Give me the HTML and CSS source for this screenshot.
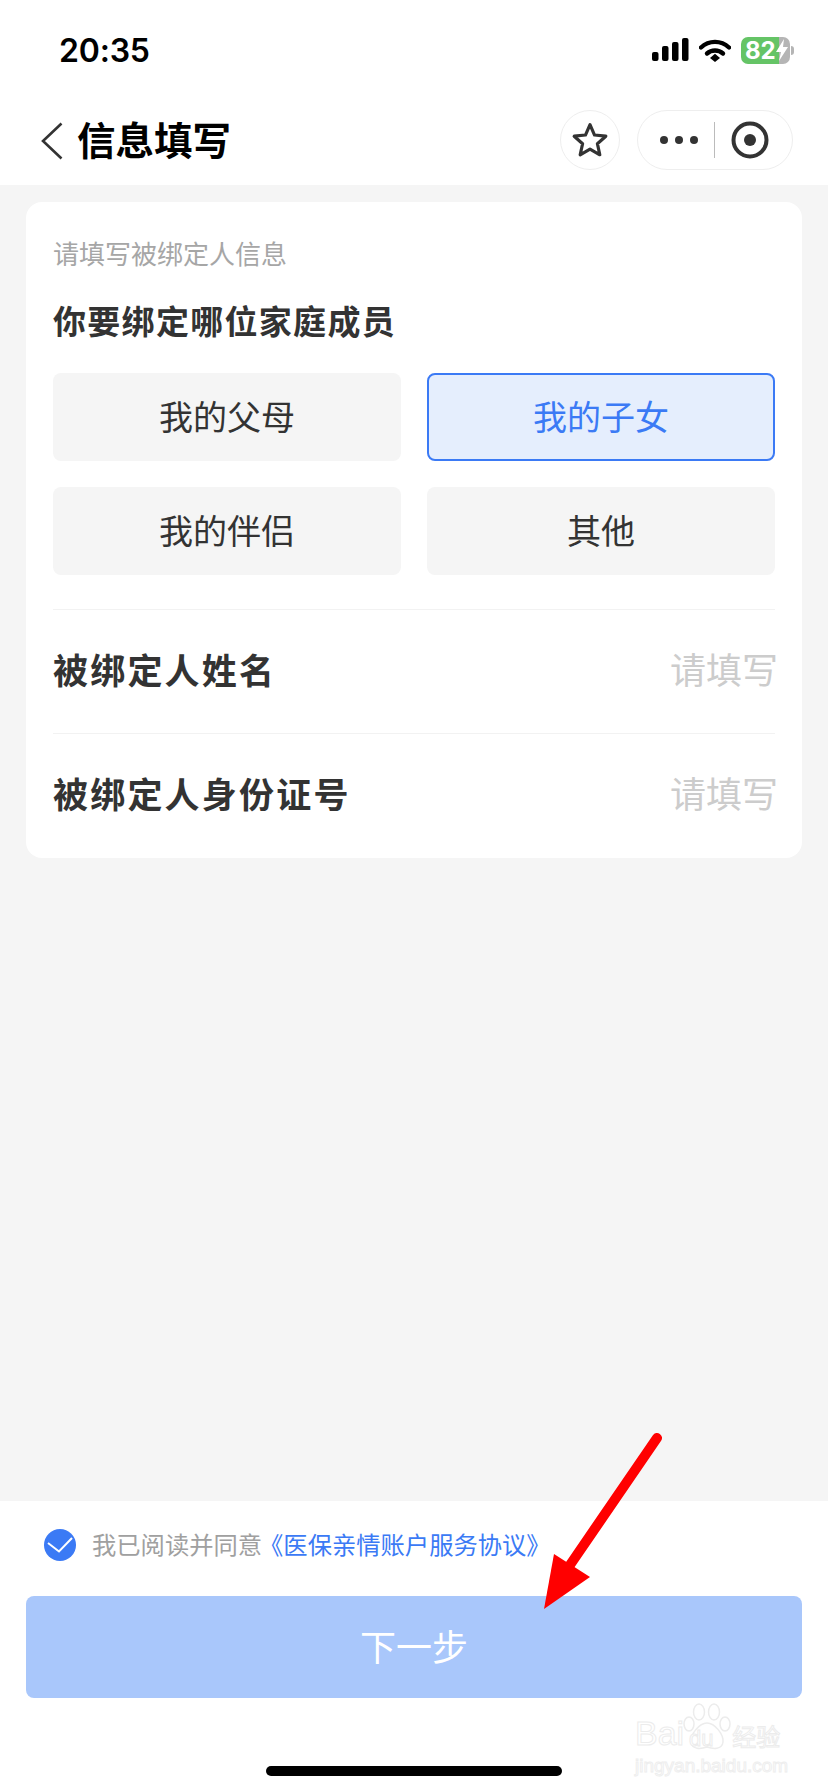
FILE: index.html
```html
<!DOCTYPE html>
<html lang="zh-CN">
<head>
    <meta charset="UTF-8">
    <meta name="viewport" content="width=device-width, initial-scale=1.0">
    <title>信息填写</title>
    <link rel="stylesheet" href="styles.css">
</head>
<body>

<div class="page">
    <div class="status-bar">
        <span class="time">20:35</span>
        <div class="status-icons">
            <svg class="signal" width="37" height="24" viewBox="0 0 37 24">
                <rect x="0" y="14" width="6.5" height="9" rx="2"/>
                <rect x="10" y="8" width="6.5" height="15" rx="2"/>
                <rect x="20" y="4" width="6.5" height="19" rx="2"/>
                <rect x="30" y="0" width="6.5" height="23" rx="2"/>
            </svg>
            <svg class="wifi" width="32" height="24" viewBox="0 0 32 24">
                <path d="M2 9.5C10 2 22 2 30 9.5" fill="none" stroke="#000" stroke-width="4.4" stroke-linecap="round"/>
                <path d="M8 15.5C12.500 11.500 19.500 11.500 24 15.500" fill="none" stroke="#000" stroke-width="4.400" stroke-linecap="round"/>
                <path d="M11 20L16 15.800L21 20L16 24Z"/>
            </svg>
            <div class="battery">
                <div class="battery-body">
                    <span class="battery-num">82</span>
                    <svg class="bolt" width="12" height="22" viewBox="0 0 12 22">
                        <path d="M8 0L0 13H5L3 22L12 8H7Z" fill="#fff"/>
                    </svg>
                </div>
                <div class="battery-tip"></div>
            </div>
        </div>
    </div>

    <div class="nav-bar">
        <svg class="back" width="24" height="38" viewBox="0 0 24 38">
            <path d="M21.500 1.500L3 19L21.500 36.500" fill="none" stroke="#333" stroke-width="2.600"/>
        </svg>
        <span class="nav-title">信息填写</span>
        <div class="nav-actions">
            <div class="star-btn">
                <svg width="38" height="38" viewBox="0 0 36 36">
                    <path d="M18 3.500L22.300 13.300L33 14.400L25 21.500L27.300 32L18 26.600L8.700 32L11 21.500L3 14.400L13.700 13.300Z" fill="none" stroke="#333" stroke-width="3" stroke-linejoin="round"/>
                </svg>
            </div>
            <div class="capsule">
                <div class="dots">
                    <span class="dot"></span>
                    <span class="dot"></span>
                    <span class="dot"></span>
                </div>
                <span class="capsule-line"></span>
                <svg width="38" height="38" viewBox="0 0 38 38">
                    <circle cx="19" cy="19" r="16.500" fill="none" stroke="#333" stroke-width="4"/>
                    <circle cx="19" cy="19" r="6" fill="#333"/>
                </svg>
            </div>
        </div>
    </div>

    <div class="content">
        <div class="card">
            <p class="hint">请填写被绑定人信息</p>
            <h2 class="question">你要绑定哪位家庭成员</h2>
            <div class="options">
                <div class="option">我的父母</div>
                <div class="option selected">我的子女</div>
                <div class="option">我的伴侣</div>
                <div class="option">其他</div>
            </div>
            <div class="field">
                <span class="field-label">被绑定人姓名</span>
                <span class="field-value">请填写</span>
            </div>
            <div class="field">
                <span class="field-label">被绑定人身份证号</span>
                <span class="field-value">请填写</span>
            </div>
        </div>
    </div>

    <div class="footer">
        <div class="agree">
            <svg class="check" width="32" height="32" viewBox="0 0 32 32">
                <circle cx="16" cy="16" r="16" fill="#3b7af5"/>
                <path d="M4 14L15 22.500L28 9" fill="none" stroke="#fff" stroke-width="2"/>
            </svg>
            <span class="agree-text">我已阅读并同意</span><span class="agree-link">《医保亲情账户服务协议》</span>
        </div>
        <div class="next-btn">下一步</div>
        <div class="home-bar"></div>
    </div>

    <svg class="arrow" width="130" height="190" viewBox="0 0 130 190">
        <path d="M117 8L30 135" fill="none" stroke="#f00" stroke-width="10" stroke-linecap="round"/>
        <path d="M4 179L14 124L50 147Z" fill="#f00"/>
    </svg>

    <div class="watermark">
        <div class="wm-top">
            <span class="wm-bai">Bai</span>
            <svg class="wm-paw" width="50" height="48" viewBox="0 0 50 48">
                <g fill="#fff" stroke="#ececec" stroke-width="1.500">
                    <ellipse cx="7" cy="21" rx="5" ry="7"/>
                    <ellipse cx="17" cy="9" rx="5.500" ry="8"/>
                    <ellipse cx="32" cy="9" rx="5.500" ry="8"/>
                    <ellipse cx="43" cy="21" rx="5" ry="7"/>
                    <path d="M25 20C33 20 42 32 41 39C40 47 31 46 25 44C19 46 10 47 9 39C8 32 17 20 25 20Z"/>
                </g>
            </svg>
            <span class="wm-du">du</span>
            <span class="wm-cn">经验</span>
        </div>
        <div class="wm-url">jingyan.baidu.com</div>
    </div>
</div>

</body>
</html>
```

FILE: styles.css
```css
body {
    margin: 0;
    padding: 0;
    background-color: #fff;
    font-family: "Noto Sans CJK SC", "Noto Sans", sans-serif;
}

.page {
    position: relative;
    width: 828px;
    height: 1792px;
    display: flex;
    flex-direction: column;
    overflow: hidden;
}

/* status bar */
.status-bar {
    height: 100px;
    flex-shrink: 0;
    display: flex;
    justify-content: space-between;
    align-items: center;
    box-sizing: border-box;
    padding: 0 34px 0 59px;
}

.time {
    font-family: Inter, "Liberation Sans", sans-serif;
    font-size: 32px;
    font-weight: 600;
    letter-spacing: -0.2px;
    color: #000;
}

.status-icons {
    display: flex;
    align-items: center;
    gap: 10px;
}

.battery {
    display: flex;
    align-items: center;
}

.battery-body {
    width: 49px;
    height: 27px;
    border-radius: 7px;
    background: linear-gradient(to right, #65c466 38px, #b5b5b5 38px);
    display: flex;
    align-items: center;
    padding-left: 4px;
    box-sizing: border-box;
    overflow: hidden;
}

.battery-num {
    font-family: Inter, "Liberation Sans", sans-serif;
    font-size: 24px;
    font-weight: 700;
    color: #fff;
}

.bolt {
    flex-shrink: 0;
}

.battery-tip {
    width: 3px;
    height: 9px;
    margin-left: 1px;
    background-color: #b5b5b5;
    border-radius: 0 3px 3px 0;
}

/* nav bar */
.nav-bar {
    height: 85px;
    flex-shrink: 0;
    display: flex;
    align-items: flex-start;
    box-sizing: border-box;
    padding: 10px 35px 0 40px;
}

.back {
    margin-top: 12px;
}

.nav-title {
    margin-left: 13px;
    font-size: 38.500px;
    line-height: 44px;
    margin-top: 6px;
    font-weight: 700;
    color: #000;
}

.nav-actions {
    margin-left: auto;
    display: flex;
    gap: 17px;
}

.star-btn {
    width: 60px;
    height: 60px;
    box-sizing: border-box;
    border: 1px solid #eee;
    border-radius: 50%;
    display: flex;
    align-items: center;
    justify-content: center;
}

.capsule {
    width: 156px;
    height: 60px;
    box-sizing: border-box;
    border: 1px solid #eee;
    border-radius: 30px;
    display: flex;
    align-items: center;
    padding-left: 22px;
}

.dots {
    display: flex;
    gap: 7px;
}

.dot {
    width: 8px;
    height: 8px;
    border-radius: 50%;
    background-color: #333;
}

.capsule-line {
    width: 1px;
    height: 36px;
    margin: 0 16px;
    background-color: #bbb;
}

/* form card */
.content {
    flex: 1;
    background-color: #f5f5f5;
    padding: 17px 26px 0;
}

.card {
    background-color: #fff;
    border-radius: 16px;
    padding: 33px 27px 0;
    height: 656px;
    box-sizing: border-box;
}

.hint {
    margin: 0;
    font-size: 26px;
    line-height: 36px;
    color: #a6a6a6;
}

.question {
    margin: 26px 0 0;
    font-size: 33px;
    line-height: 46px;
    letter-spacing: 1.300px;
    font-weight: 700;
    color: #333;
}

.options {
    display: grid;
    grid-template-columns: 348px 348px;
    grid-auto-rows: 88px;
    column-gap: 26px;
    row-gap: 26px;
    margin-top: 30px;
    margin-bottom: 34px;
}

.option {
    box-sizing: border-box;
    padding-bottom: 3px;
    background-color: #f5f5f5;
    border-radius: 8px;
    display: flex;
    align-items: center;
    justify-content: center;
    font-size: 34px;
    color: #333;
}

.option.selected {
    background-color: #e5eefd;
    border: 2px solid #3b7af5;
    color: #3b7af5;
}

.field {
    height: 124px;
    box-sizing: border-box;
    border-top: 1px solid #f2f2f2;
    padding-bottom: 7px;
    display: flex;
    align-items: center;
    justify-content: space-between;
}

.field-label {
    font-size: 35px;
    letter-spacing: 2.200px;
    font-weight: 700;
    color: #333;
}

.field-value {
    font-size: 36px;
    margin-right: -3px;
    color: #ccc;
}

/* footer */
.footer {
    height: 291px;
    flex-shrink: 0;
    box-sizing: border-box;
    padding: 28px 26px 0;
    background-color: #fff;
}

.agree {
    display: flex;
    align-items: center;
    height: 32px;
    padding-left: 18px;
    font-size: 24.300px;
}

.check {
    margin-right: 16px;
    flex-shrink: 0;
}

.agree-text {
    color: #a0a0a0;
    margin-top: -4px;
}

.agree-link {
    color: #3b7af5;
    margin-top: -4px;
    margin-left: -3px;
}

.next-btn {
    margin-top: 35px;
    height: 102px;
    box-sizing: border-box;
    padding-bottom: 4px;
    background-color: #a9c7fb;
    border-radius: 8px;
    display: flex;
    align-items: center;
    justify-content: center;
    font-size: 36px;
    color: #fff;
}

.home-bar {
    width: 296px;
    height: 10px;
    margin: 68px auto 0;
    background-color: #000;
    border-radius: 5px;
}

/* overlays */
.arrow {
    position: absolute;
    left: 540px;
    top: 1430px;
}

.watermark {
    position: absolute;
    left: 635px;
    top: 1703px;
    width: 150px;
}

.wm-top {
    display: flex;
    align-items: flex-end;
    height: 48px;
}

.wm-bai,
.wm-du {
    font-family: "Liberation Sans", sans-serif;
    color: #fff;
    -webkit-text-stroke: 1px #ececec;
}

.wm-bai {
    font-size: 34px;
    line-height: 36px;
}

.wm-paw {
    margin-left: -2px;
    flex-shrink: 0;
}

.wm-du {
    position: absolute;
    left: 54px;
    top: 24px;
    font-size: 22px;
    line-height: 24px;
}

.wm-cn {
    font-size: 24px;
    line-height: 30px;
    color: #fff;
    -webkit-text-stroke: 1px #ececec;
    white-space: nowrap;
}

.wm-url {
    margin-top: 4px;
    font-family: "Liberation Sans", sans-serif;
    font-size: 19px;
    line-height: 22px;
    color: #fff;
    -webkit-text-stroke: 1px #eee;
    white-space: nowrap;
}
```
